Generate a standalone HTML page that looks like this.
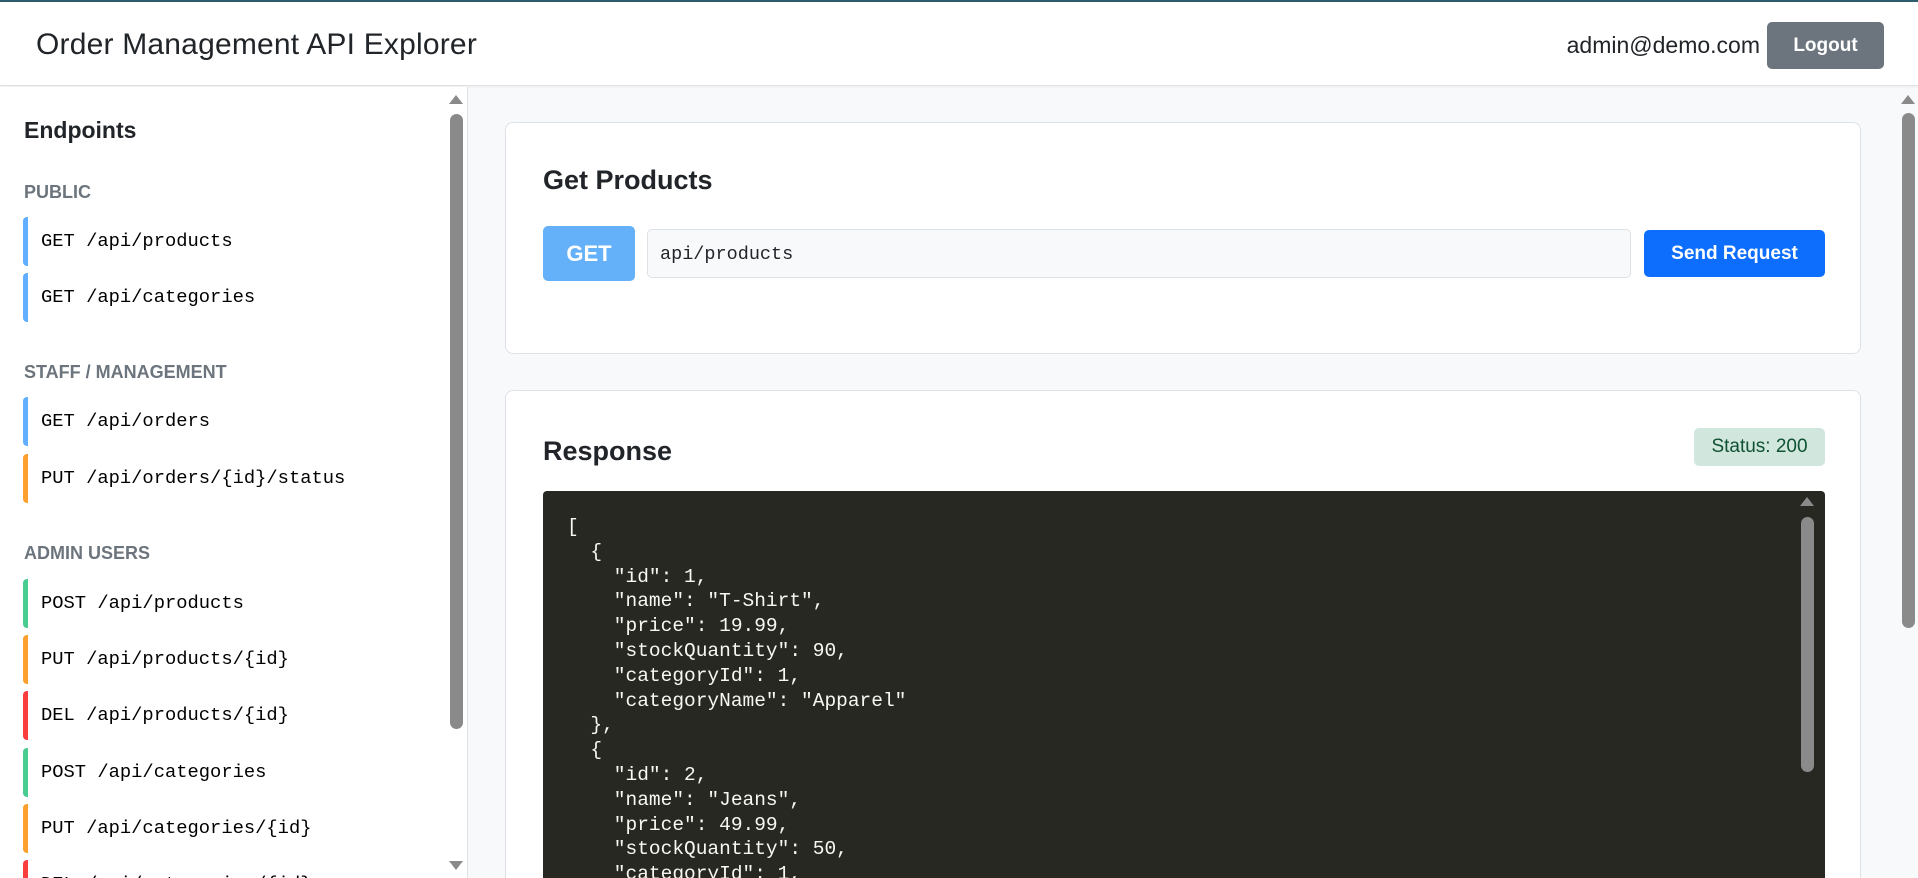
<!DOCTYPE html>
<html><head><meta charset="utf-8"><style>
*{box-sizing:border-box;margin:0;padding:0}
html,body{width:1918px;height:878px;overflow:hidden}
body{background:#f8f9fa;font-family:"Liberation Sans",sans-serif;position:relative;color:#212529}
#wrap{position:absolute;left:0;top:0;width:1918px;height:878px;overflow:hidden}
.top{position:absolute;left:0;top:0;width:1918px;height:2px;background:#2f5d6b}
header{position:absolute;left:0;top:2px;width:1918px;height:84px;background:#fff;border-bottom:1px solid #dee2e6;box-shadow:0 1px 3px rgba(0,0,0,.05)}
header h1{position:absolute;left:36px;top:26px;font-size:30px;font-weight:normal;color:#212529;letter-spacing:.2px}
.email{position:absolute;right:158px;top:30px;font-size:23px;color:#212529}
.logout{position:absolute;left:1767px;top:20px;width:117px;height:47px;background:#6c757d;color:#fff;border-radius:5px;font-weight:bold;font-size:19px;text-align:center;line-height:47px}
aside{position:absolute;left:0;top:87px;width:468px;height:791px;background:#fff;border-right:1px solid #dee2e6;overflow:hidden}
aside h2{position:absolute;left:24px;top:30px;font-size:23px}
.sec{position:absolute;left:24px;font-size:18px;font-weight:bold;color:#6c757d}
.it{position:absolute;left:23px;width:410px;height:49px;border-left:5px solid #61affe;border-radius:4px;font-family:"Liberation Mono",monospace;font-size:18.8px;line-height:49px;padding-left:13px;color:#000}
.g{border-color:#61affe}.p{border-color:#fca130}.o{border-color:#49cc90}.d{border-color:#f93e3e}
.sb{position:absolute;width:13px;background:#8a8a8a;border-radius:7px}
.tri{position:absolute;width:0;height:0;border-left:7px solid transparent;border-right:7px solid transparent}
.up{border-bottom:9px solid #8a8a8a}.dn{border-top:9px solid #8a8a8a}
.card{position:absolute;left:505px;width:1356px;background:#fff;border:1px solid #dee2e6;border-radius:8px}
.ct{position:absolute;left:37px;font-size:27px;font-weight:bold;color:#212529}
.badge{position:absolute;left:37px;top:103px;width:92px;height:55px;background:#64b0f9;color:#fff;border-radius:5px;font-weight:bold;font-size:22px;text-align:center;line-height:55px}
.inp{position:absolute;left:141px;top:106px;width:984px;height:49px;background:#f8f9fa;border:1px solid #dee2e6;border-radius:5px;font-family:"Liberation Mono",monospace;font-size:18.5px;line-height:49px;padding-left:12px;color:#212529}
.send{position:absolute;left:1138px;top:107px;width:181px;height:47px;background:#0d6efd;color:#fff;border-radius:5px;font-weight:bold;font-size:19px;text-align:center;line-height:47px}
.status{position:absolute;left:1188px;top:37px;width:131px;height:38px;background:#d1e7dd;color:#0f5132;border-radius:5px;font-size:19px;text-align:center;line-height:38px}
.code{position:absolute;left:37px;top:100px;width:1282px;height:500px;background:#272822;border-radius:4px;overflow:hidden}
pre{position:absolute;left:24px;top:24px;font-family:"Liberation Mono",monospace;font-size:19.5px;line-height:24.8px;color:#f8f8f2}
</style></head><body><div id="wrap">
<div class="top"></div>
<header><h1>Order Management API Explorer</h1><div class="email">admin@demo.com</div><div class="logout">Logout</div></header>
<aside>
<h2>Endpoints</h2>
<div class="sec" style="top:95px">PUBLIC</div>
<div class="it g" style="top:130px">GET /api/products</div>
<div class="it g" style="top:186px">GET /api/categories</div>
<div class="sec" style="top:275px">STAFF / MANAGEMENT</div>
<div class="it g" style="top:310px">GET /api/orders</div>
<div class="it p" style="top:367px">PUT /api/orders/{id}/status</div>
<div class="sec" style="top:456px">ADMIN USERS</div>
<div class="it o" style="top:492px">POST /api/products</div>
<div class="it p" style="top:548px">PUT /api/products/{id}</div>
<div class="it d" style="top:604px">DEL /api/products/{id}</div>
<div class="it o" style="top:661px">POST /api/categories</div>
<div class="it p" style="top:717px">PUT /api/categories/{id}</div>
<div class="it d" style="top:773px">DEL /api/categories/{id}</div>
<div class="tri up" style="left:449px;top:8px"></div>
<div class="sb" style="left:450px;top:27px;height:615px"></div>
<div class="tri dn" style="left:449px;top:774px"></div>
</aside>
<div class="tri up" style="left:1901px;top:95px"></div>
<div class="sb" style="left:1902px;top:113px;height:515px"></div>
<div class="card" style="top:122px;height:232px">
<div class="ct" style="top:42px">Get Products</div>
<div class="badge">GET</div>
<div class="inp">api/products</div>
<div class="send">Send Request</div>
</div>
<div class="card" style="top:390px;height:600px">
<div class="ct" style="top:45px">Response</div>
<div class="status">Status: 200</div>
<div class="code">
<pre>[
  {
    "id": 1,
    "name": "T-Shirt",
    "price": 19.99,
    "stockQuantity": 90,
    "categoryId": 1,
    "categoryName": "Apparel"
  },
  {
    "id": 2,
    "name": "Jeans",
    "price": 49.99,
    "stockQuantity": 50,
    "categoryId": 1,</pre>
<div class="tri up" style="left:1257px;top:6px"></div>
<div class="sb" style="left:1258px;top:26px;height:255px"></div>
</div>
</div>
</div></body></html>
